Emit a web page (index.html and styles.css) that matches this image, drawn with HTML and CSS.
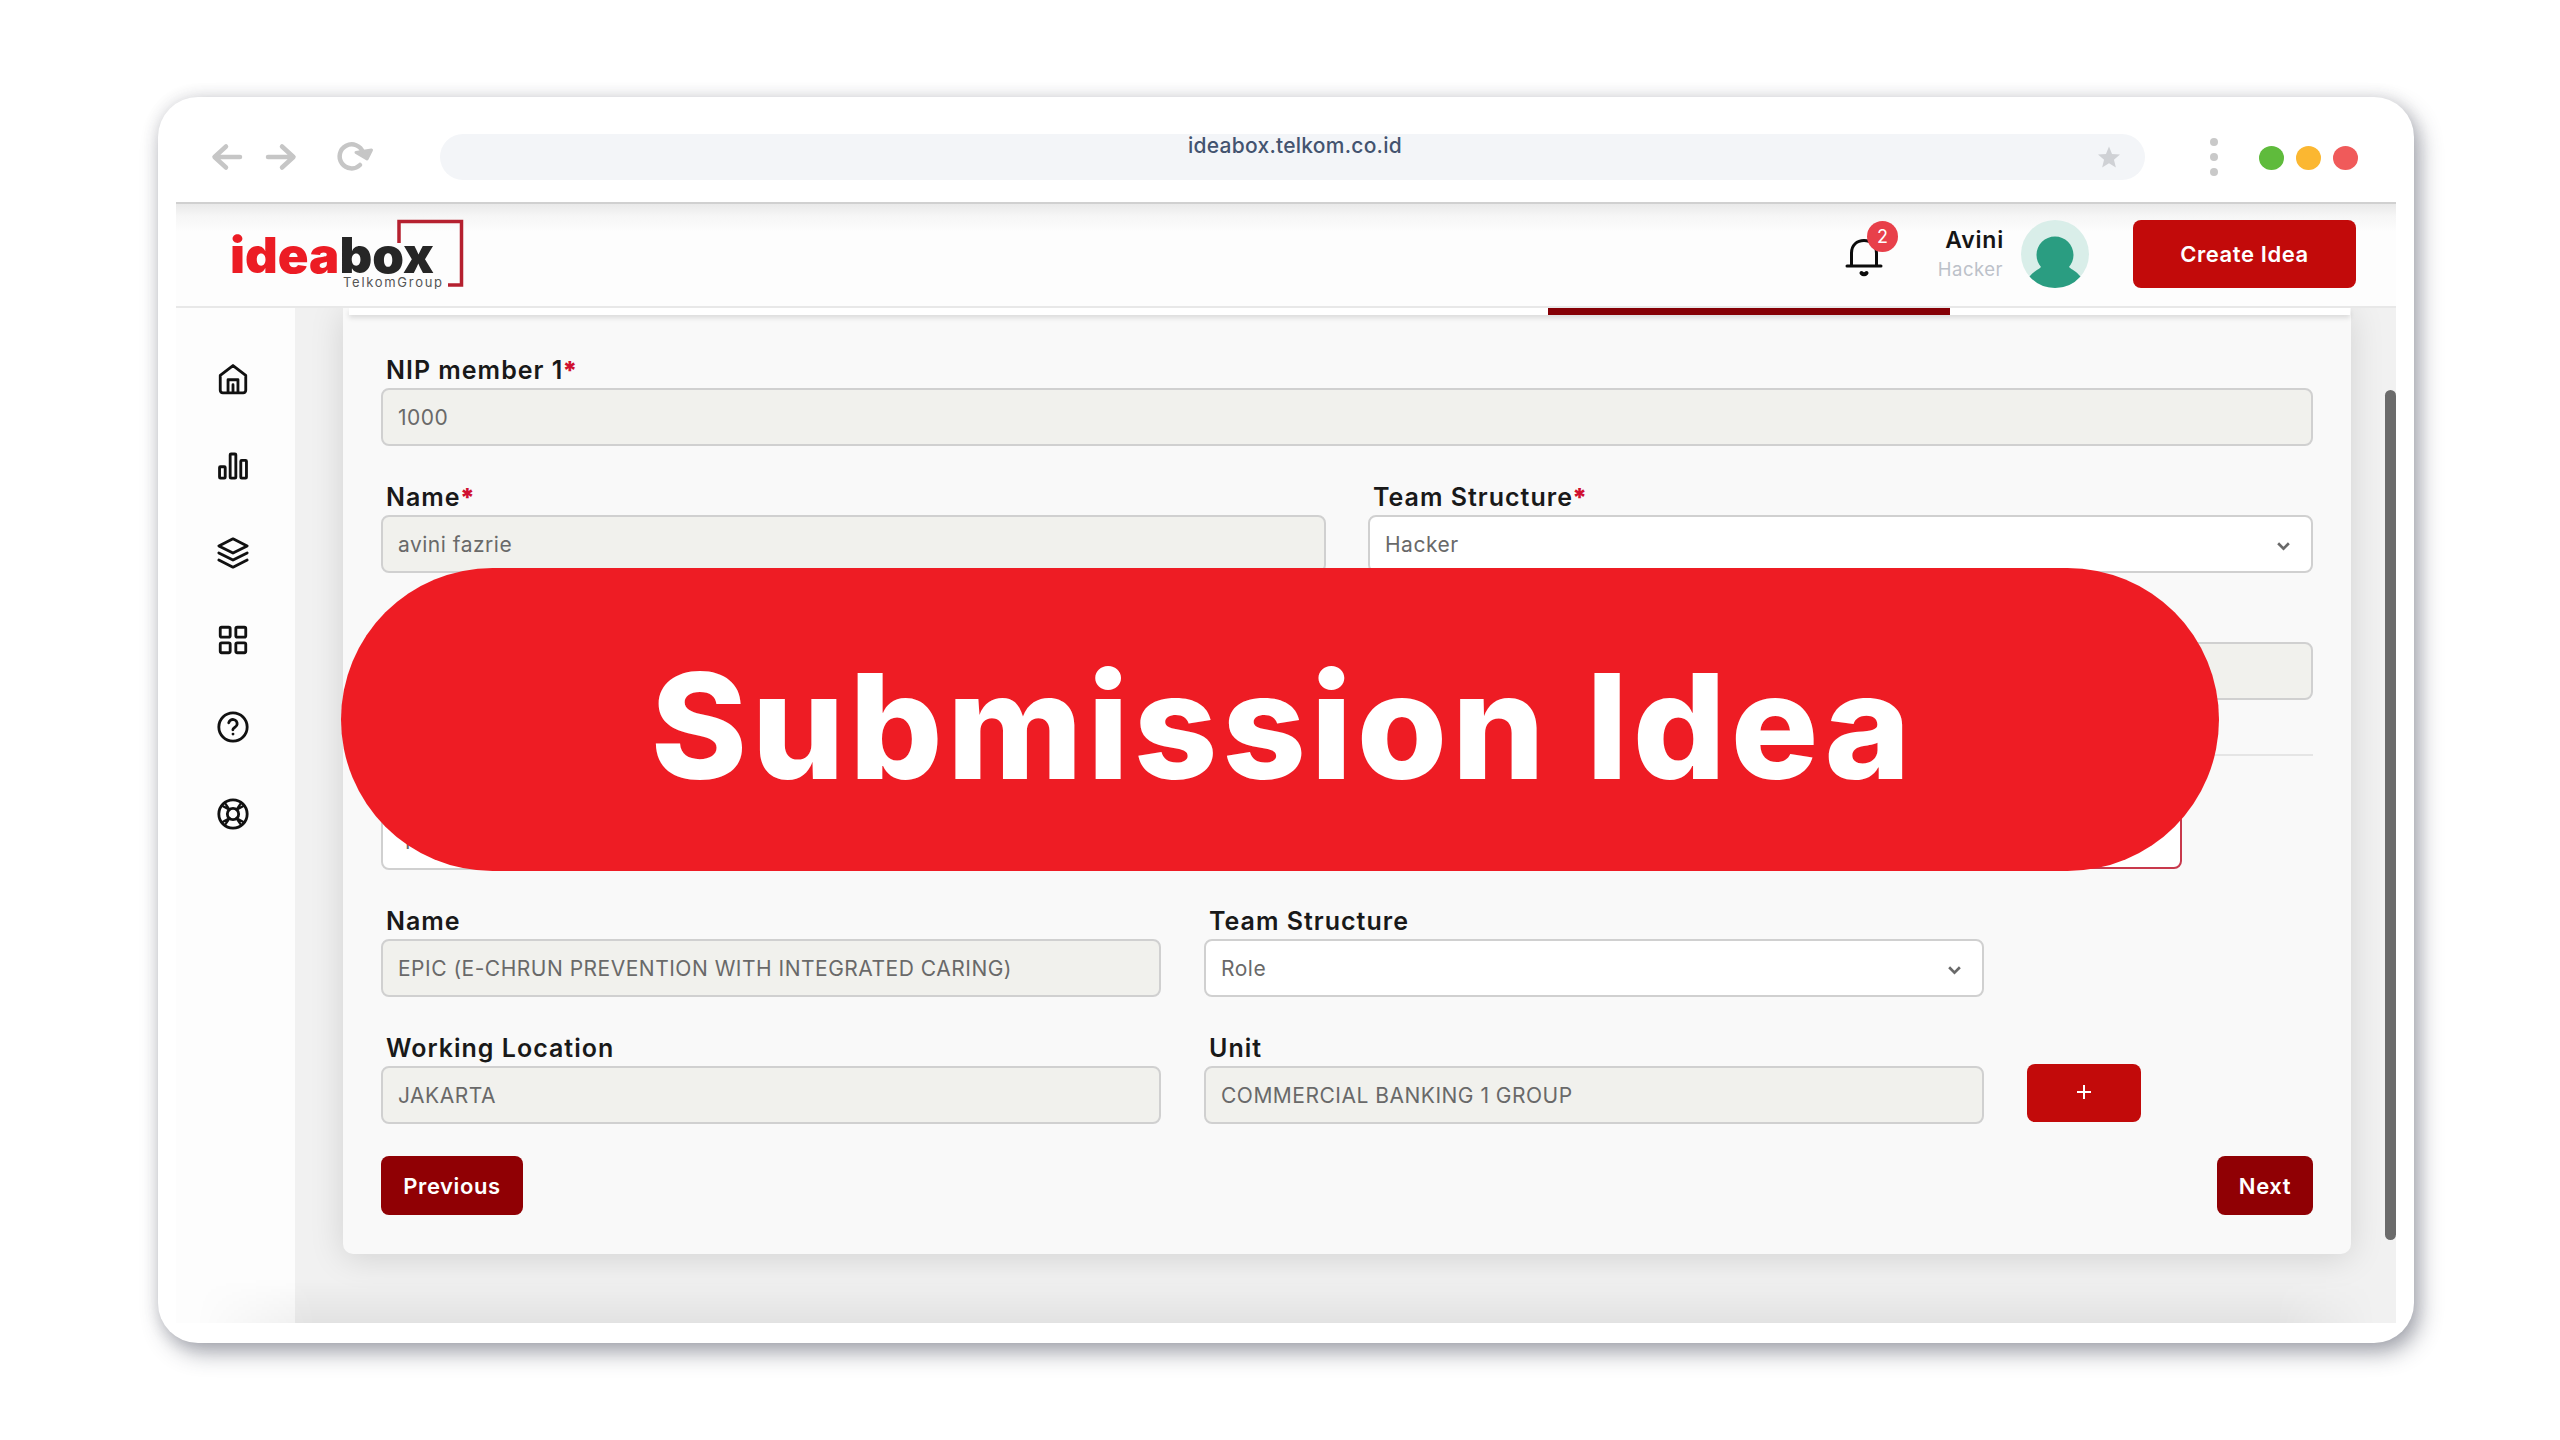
FILE: index.html
```html
<!DOCTYPE html>
<html lang="en">
<head>
<meta charset="utf-8">
<title>Ideabox</title>
<link rel="stylesheet" href="styles.css">
</head>
<body>
<div class="window">
  <div class="toolbar">
    <svg class="nav" width="170" height="40" viewBox="0 0 170 40" fill="none" stroke="#c6c6c6" stroke-width="4.500" stroke-linecap="round" stroke-linejoin="round">
      <path d="M31 20H6M17 9.500 5.500 20 17 30.500"/>
      <path d="M59 20H84M73 9.500 84.500 20 73 30.500"/>
      <path d="M151 28A12 12 0 1 1 154 15.500"/>
      <path d="M147 15.500 158 22 162.500 13Z" fill="#c6c6c6" stroke-width="3"/>
    </svg>
    <div class="address">
      <span class="url">ideabox.telkom.co.id</span>
      <svg class="star" width="22" height="22" viewBox="0 0 24 24" fill="#cfd1d5"><path d="M12 0.500 15.300 8.600 24 9.300 17.400 15 19.500 23.500 12 18.900 4.500 23.500 6.600 15 0 9.300 8.700 8.600Z"/></svg>
    </div>
    <div class="dots"><i></i><i></i><i></i></div>
    <div class="lights"><i class="green"></i><i class="amber"></i><i class="red"></i></div>
  </div>
  <header class="header">
    <svg class="logo" width="240" height="80" viewBox="0 0 240 80">
      <path d="M172 34V12.500H234.500V76H221" fill="none" stroke="#b5202f" stroke-width="3.500"/>
      <text x="3" y="63.500" class="logo-name" textLength="204" lengthAdjust="spacingAndGlyphs"><tspan fill="#ec1c24">idea</tspan><tspan fill="#262626">box</tspan></text>
      <text x="116" y="78" class="logo-sub" textLength="99">TelkomGroup</text>
    </svg>
    <div class="bell">
      <svg width="42" height="44" viewBox="0 0 42 44" fill="none" stroke="#0c0c0c" stroke-width="3" stroke-linecap="round">
        <path d="M4 31H38M8.500 31V18C8.500 10 14 5.500 21 5.500S33.500 10 33.500 18V31"/>
        <path d="M18.500 38Q21 40.500 23.500 38" stroke-width="4"/>
      </svg>
      <span class="badge">2</span>
    </div>
    <div class="user"><b>Avini</b><span>Hacker</span></div>
    <svg class="avatar" width="68" height="68" viewBox="0 0 68 68">
      <circle cx="34" cy="34" r="34" fill="#d9eee9"/>
      <path d="M34 16.500c10 0 18.500 8 18.500 18.500 0 5-2 9-4.500 12 3 3 7 4 11.500 9.500A34 34 0 0 1 34 68 34 34 0 0 1 8.500 56.500C13 51 17 50 20 47c-2.500-3-4.500-7-4.500-12C15.500 24.500 24 16.500 34 16.500Z" fill="#2a9d81"/>
    </svg>
    <button class="create">Create Idea</button>
  </header>
  <div class="body">
    <nav class="sidebar">
      <svg viewBox="0 0 24 24"><path d="M3 9.500 12 2.500 21 9.500V20a1.800 1.800 0 0 1-1.800 1.800H4.800A1.800 1.800 0 0 1 3 20ZM8.500 21.500V12.500h7v9M12 16v5.500"/></svg>
      <svg viewBox="0 0 24 24"><rect x="2.500" y="12.500" width="4" height="8" rx=".6"/><rect x="10" y="3.500" width="4" height="17" rx=".6"/><rect x="17.500" y="8" width="4" height="12.500" rx=".6"/></svg>
      <svg viewBox="0 0 24 24"><path d="M12 2 2 7l10 5 10-5ZM2 12l10 5 10-5M2 17l10 5 10-5"/></svg>
      <svg viewBox="0 0 24 24"><rect x="3" y="3" width="7" height="7" rx="1"/><rect x="14" y="3" width="7" height="7" rx="1"/><rect x="3" y="14" width="7" height="7" rx="1"/><rect x="14" y="14" width="7" height="7" rx="1"/></svg>
      <svg viewBox="0 0 24 24"><circle cx="12" cy="12" r="10"/><path d="M9 9a3 3 0 0 1 5.900 1c0 2-3 2.500-3 4M12 17h.01"/></svg>
      <svg viewBox="0 0 24 24"><circle cx="12" cy="12" r="10"/><circle cx="12" cy="12" r="4"/><path d="m6.500 4.500 3 4.500-4.500-2.500M17.500 4.500l-3 4.500 4.500-2.500M6.500 19.500l3-4.500L5 17.500M17.500 19.500l-3-4.500 4.500 2.500" stroke-width="1.600"/></svg>
    </nav>
    <main class="content">
      <section class="card">
        <div class="tabs"><div class="tab-active"></div></div>
        <div class="form">
          <div class="row"><div class="field"><label>NIP member 1<em>*</em></label><div class="input off">1000</div></div></div>
          <div class="row">
            <div class="field"><label>Name<em>*</em></label><div class="input off">avini fazrie</div></div>
            <div class="field"><label>Team Structure<em>*</em></label><div class="input">Hacker<svg class="chev" viewBox="0 0 14 10"><path d="M2 2l5 5 5-5"/></svg></div></div>
          </div>
          <div class="row">
            <div class="field"><label></label><div class="input off"></div></div>
            <div class="field"><label></label><div class="input off"></div></div>
          </div>
          <hr>
          <div class="row search">
            <div class="field"><label></label><div class="input inset">1</div></div>
            <div class="field"><label></label><div class="input outlined"></div></div>
          </div>
          <div class="row member">
            <div class="field"><label>Name</label><div class="input off caps">EPIC (E-CHRUN PREVENTION WITH INTEGRATED CARING)</div></div>
            <div class="field"><label>Team Structure</label><div class="input">Role<svg class="chev" viewBox="0 0 14 10"><path d="M2 2l5 5 5-5"/></svg></div></div>
          </div>
          <div class="row member">
            <div class="field"><label>Working Location</label><div class="input off caps">JAKARTA</div></div>
            <div class="field"><label>Unit</label><div class="input off caps">COMMERCIAL BANKING 1 GROUP</div></div>
            <button class="add"><svg width="16" height="16" viewBox="0 0 16 16"><path d="M8 1v14M1 8h14" stroke="#fff" stroke-width="2"/></svg></button>
          </div>
          <div class="actions"><button class="previous">Previous</button><button class="next">Next</button></div>
        </div>
      </section>
      <div class="scrollbar"></div>
    </main>
    <div class="fade"></div>
  </div>
  <div class="banner"><span>Submission Idea</span></div>
</div>
</body>
</html>
```
FILE: styles.css
```css
* { box-sizing: border-box; }
body {
  margin: 0;
  width: 2560px;
  height: 1440px;
  padding: 97px 146px 0 158px;
  background: #fff;
  font-family: Inter, "Liberation Sans", sans-serif;
  overflow: hidden;
}
button { border: 0; padding: 0; color: #fff; font-family: inherit; font-weight: 600; }

.window {
  position: relative;
  height: 1246px;
  padding: 0 18px 20px;
  border-radius: 40px;
  background: #fff;
  box-shadow: 6px 10px 22px rgba(50, 54, 75, .42), 0 0 16px rgba(60, 60, 70, .14);
}

.toolbar { height: 107px; display: flex; align-items: center; padding: 14px 38px 0 33px; border-bottom: 2px solid #d0d0d0; }
.address {
  width: 1705px;
  height: 46px;
  margin-left: 61px;
  border-radius: 23px;
  background: #f3f5f8;
  display: flex;
  align-items: center;
  padding: 0 25px 0 748px;
}
.url { font-size: 21px; letter-spacing: .25px; font-weight: 500; color: #43536f; margin-top: -23px; }
.star { margin-left: auto; }
.dots { margin-left: 65px; display: flex; flex-direction: column; gap: 7px; }
.dots i { width: 8px; height: 8px; border-radius: 50%; background: #c9c9c9; }
.lights { margin-left: auto; margin-top: 3px; display: flex; gap: 12px; }
.lights i { width: 25px; height: 24px; border-radius: 50%; }
.green { background: #5fbb3c; }
.amber { background: #fbb731; }
.red { background: #f05a5a; }

.header {
  height: 104px;
  display: flex;
  align-items: center;
  padding: 0 40px 2px 51px;
  background: linear-gradient(#e9e9e9, #f6f6f6 12px, #fdfdfd 28px);
  border-bottom: 2px solid #e8e8e8;
}
.logo { margin-bottom: 10px; }
.logo-name { font: 900 49px Inter, sans-serif; }
.logo-sub { font: 400 13px Inter, sans-serif; fill: #555; }
.bell { position: relative; width: 42px; height: 44px; margin-left: auto; margin-top: 5px; }
.badge {
  position: absolute;
  left: 24px;
  top: -14px;
  width: 31px;
  height: 31px;
  border-radius: 50%;
  background: #e8404a;
  color: #fff;
  font-size: 18px;
  line-height: 31px;
  text-align: center;
}
.user { width: 118px; display: flex; flex-direction: column; align-items: flex-end; margin-right: 18px; margin-top: -1px; }
.user b { font-size: 23px; line-height: 30px; font-weight: 600; color: #151515; letter-spacing: .8px; margin-right: -1px; }
.user span { font-size: 18.5px; line-height: 28px; color: #bcc1c9; letter-spacing: .5px; }
.create { width: 223px; height: 68px; margin-left: 44px; border-radius: 8px; background: #c20a0a; font-size: 22px; letter-spacing: .6px; }

.body { position: relative; height: 1015px; display: flex; }
.sidebar { width: 119px; padding: 54px 0 0 40px; display: flex; flex-direction: column; gap: 53px; background: #fdfdfd; }
.sidebar svg { width: 34px; height: 34px; fill: none; stroke: #111; stroke-width: 2; stroke-linecap: round; stroke-linejoin: round; }
.content { position: relative; flex: 1; background: #f1f1f1; padding: 0 45px 0 48px; overflow: hidden; }
.card { height: 946px; background: #f9f9f9; border-radius: 0 0 10px 10px; box-shadow: 0 4px 34px rgba(0, 0, 0, .13); }
.tabs { height: 7px; margin: 0 1px 0 6px; padding-left: 1199px; background: #fff; box-shadow: 0 3px 5px rgba(0, 0, 0, .12); }
.tab-active { width: 402px; height: 7px; background: #850006; }
.form { padding: 39px 38px 0; }
.row { display: flex; gap: 42px; height: 92px; margin-bottom: 35px; }
.field { flex: 1; }
label { display: block; height: 34px; padding-left: 5px; font-size: 25px; line-height: 32px; font-weight: 600; color: #191919; letter-spacing: 1px; }
label em { color: #d01030; font-style: normal; font-weight: 900; margin-left: -1px; }
.input {
  position: relative;
  height: 58px;
  padding: 0 0 0 15px;
  display: flex;
  align-items: center;
  justify-content: space-between;
  border: 2px solid #d0d0d0;
  border-radius: 8px;
  background: #fff;
  font-size: 21px;
  color: #696969;
  letter-spacing: .5px;
}
.off { background: #f1f1ed; }
.inset { padding-left: 19px; }
.outlined { border-color: #c8394c; height: 57px; }
.chev { width: 15px; height: 11px; margin-right: 20px; margin-top: 4px; fill: none; stroke: #696969; stroke-width: 2.500; }
hr { height: 2px; margin: 54px 0 22px; border: 0; background: #e5e5e5; }
.search { width: 1801px; }
.member .field { flex: none; width: 780px; }
.member { gap: 43px; }
.add { width: 114px; height: 58px; margin-top: 32px; border-radius: 8px; background: #c20a0a; }
.actions { display: flex; justify-content: space-between; margin-top: -3px; }
.actions button { height: 59px; border-radius: 8px; background: #900004; font-size: 22px; letter-spacing: .6px; }
.previous { width: 142px; }
.next { width: 96px; }
.fade { position: absolute; left: 20px; right: 20px; bottom: 0; height: 44px; background: linear-gradient(transparent, rgba(0, 0, 0, .06)); mask-image: linear-gradient(90deg, transparent, #000 120px, #000 calc(100% - 100px), transparent); }
.scrollbar { position: absolute; right: 0; top: 82px; width: 11px; height: 850px; border-radius: 6px; background: #6b6b6b; }

.banner {
  position: absolute;
  left: 183px;
  top: 471px;
  width: 1878px;
  height: 303px;
  border-radius: 152px;
  background: #ee1c24;
  color: #fff;
  display: flex;
  align-items: center;
  justify-content: center;
  padding: 12px 0 0 6px;
  font-size: 146px;
  font-weight: 800;
  letter-spacing: 4.8px;
  white-space: nowrap;
}
```
